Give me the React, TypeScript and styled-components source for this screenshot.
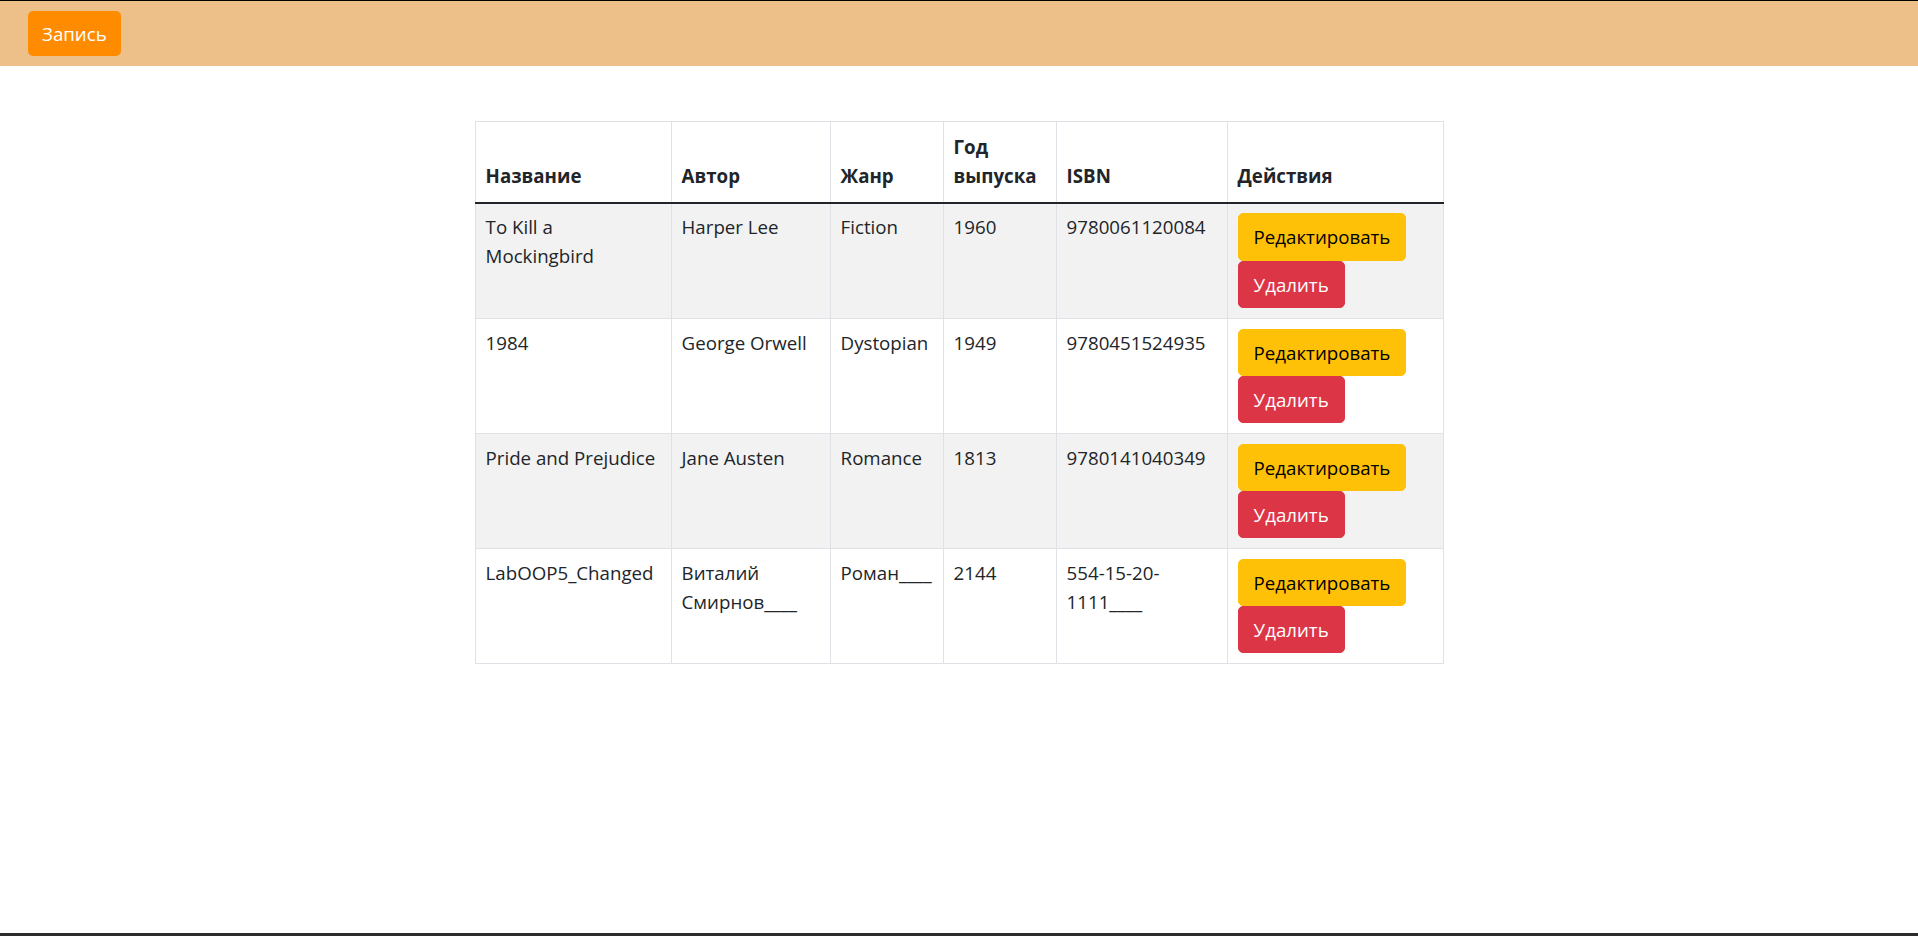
import styled, { createGlobalStyle } from "styled-components"

type bookType = {
  id: number
  title: string
  author: string
  genre: string
  year: string
  isbn: string
}

const books: bookType[] = [
  { id: 1, title: "To Kill a Mockingbird", author: "Harper Lee", genre: "Fiction", year: "1960", isbn: "9780061120084" },
  { id: 2, title: "1984", author: "George Orwell", genre: "Dystopian", year: "1949", isbn: "9780451524935" },
  { id: 3, title: "Pride and Prejudice", author: "Jane Austen", genre: "Romance", year: "1813", isbn: "9780141040349" },
  { id: 4, title: "LabOOP5_Changed", author: "Виталий Смирнов____", genre: "Роман____", year: "2144", isbn: "554-15-20-1111____" },
]

const columns = [
  { title: "Название", width: 196 },
  { title: "Автор", width: 159 },
  { title: "Жанр", width: 113 },
  { title: "Год выпуска", width: 113 },
  { title: "ISBN", width: 171 },
  { title: "Действия", width: 216 },
]

const GlobalStyle = createGlobalStyle`
  body {
    margin: 0;
    font-family: "Open Sans", "Noto Sans", sans-serif;
    font-size: 18.7px;
    line-height: 28.8px;
    color: #212529;
    background: #fff;
  }
`

export default function App() {
  const rows = books.map(el => {
    return (
      <Row key={el.id}>
        <Cell>{el.title}</Cell>
        <Cell>{el.author}</Cell>
        <Cell>{el.genre}</Cell>
        <Cell>{el.year}</Cell>
        <Cell>{el.isbn}</Cell>
        <Cell>
          <Actions>
            <Btn $variant="edit">Редактировать</Btn>
            <Btn $variant="delete">Удалить</Btn>
          </Actions>
        </Cell>
      </Row>
    )
  })

  return (
    <Page>
      <GlobalStyle />
      <Header>
        <RecordBtn>Запись</RecordBtn>
      </Header>
      <Main>
        <Table>
          <colgroup>
            {columns.map(c => <col key={c.title} style={{ width: c.width }} />)}
          </colgroup>
          <thead>
            <tr>
              {columns.map(c => <HeadCell key={c.title}>{c.title}</HeadCell>)}
            </tr>
          </thead>
          <tbody>{rows}</tbody>
        </Table>
      </Main>
      <Footer />
    </Page>
  )
}

const Page = styled.div`
  min-height: 100vh;
  display: flex;
  flex-direction: column;
`

const Header = styled.header`
  background-color: #edc08a;
  border-top: 1px solid #000;
  padding: 10px 28px;
  display: flex;
  align-items: center;
`

const RecordBtn = styled.button`
  background-color: #ff8c00;
  color: #fff;
  border: none;
  border-radius: 5px;
  font-family: inherit;
  font-size: 18.7px;
  line-height: 29px;
  padding: 8px 14px;
  cursor: pointer;
`

const Main = styled.main`
  flex: 1;
  display: flex;
  justify-content: center;
  padding-top: 55px;
  padding-left: 1px;
`

const Table = styled.table`
  width: 968px;
  table-layout: fixed;
  border-collapse: collapse;
  vertical-align: top;
  align-self: flex-start;
  border: 1px solid #dee2e6;
`

const HeadCell = styled.th`
  text-align: left;
  vertical-align: bottom;
  font-weight: 700;
  padding: 11px 9.6px;
  border: 1px solid #dee2e6;
  border-bottom: 2.4px solid #212529;
`

const Row = styled.tr`
  &:nth-child(odd) {
    background-color: #f2f2f2;
  }
`

const Cell = styled.td`
  padding: 9.9px 9.6px;
  border: 1px solid #dee2e6;
  vertical-align: top;
`

const Actions = styled.div`
  display: flex;
  flex-direction: column;
  align-items: flex-start;
`

const Btn = styled.button<{ $variant: "edit" | "delete" }>`
  background-color: ${p => (p.$variant === "edit" ? "#ffc107" : "#dc3545")};
  color: ${p => (p.$variant === "edit" ? "#000" : "#fff")};
  border: 1px solid ${p => (p.$variant === "edit" ? "#ffc107" : "#dc3545")};
  border-radius: 5px;
  font-family: inherit;
  font-size: 18.7px;
  line-height: 29.2px;
  padding: 8px 15px;
  cursor: pointer;
`

const Footer = styled.footer`
  height: 3px;
  background-color: #2b2b2b;
`
